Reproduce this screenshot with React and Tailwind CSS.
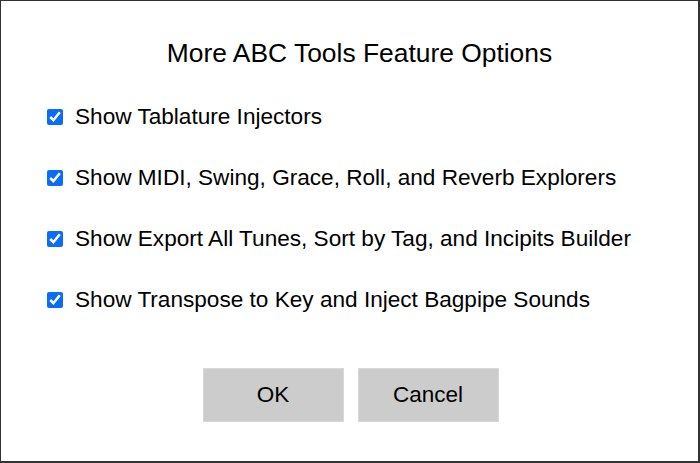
export default function App() {
  const items = [
    "Show Tablature Injectors",
    "Show MIDI, Swing, Grace, Roll, and Reverb Explorers",
    "Show Export All Tunes, Sort by Tag, and Incipits Builder",
    "Show Transpose to Key and Inject Bagpipe Sounds",
  ];
  return (
    <div
      className="w-[700px] h-[463px] bg-white border-t border-l border-r-2 border-b-2 border-[#333] flex flex-col text-black"
      style={{ fontFamily: '"Liberation Sans", Arial, sans-serif' }}
    >
      <div className="text-center text-[26.4px] leading-[26px] h-[26px] mt-[39px] pl-[20px]">More ABC Tools Feature Options</div>
      <div className="flex flex-col mt-[40px] pl-[46px] gap-[39px]">
        {items.map((t) => (
          <label key={t} className="flex items-center h-[22px]">
            <input
              type="checkbox"
              defaultChecked
              className="w-[16px] h-[16px] m-0 accent-[#0b6cf5]"
            />
            <span className="ml-[12px] text-[22.6px] leading-none">{t}</span>
          </label>
        ))}
      </div>
      <div className="flex justify-center gap-[14px] mt-[57px] pl-[2px]">
        <button className="w-[141px] h-[54px] bg-[#cccccc] border border-[#d8d8d8] text-[22.5px]">OK</button>
        <button className="w-[141px] h-[54px] bg-[#cccccc] border border-[#d8d8d8] text-[22.5px]">Cancel</button>
      </div>
    </div>
  );
}
